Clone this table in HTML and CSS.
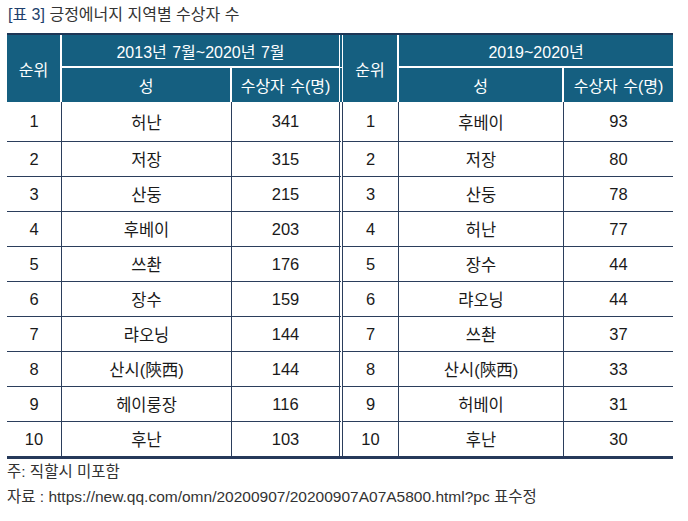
FILE: index.html
```html
<!DOCTYPE html>
<html lang="ko">
<head>
<meta charset="utf-8">
<link rel="stylesheet" href="styles.css">
</head>
<body>
<div class="page">
  <h1 class="title"><span class="tag">[표 3]</span> 긍정에너지 지역별 수상자 수</h1>
  <table class="data">
    <colgroup>
      <col class="c-rank"><col class="c-name"><col class="c-num">
      <col class="c-rank2"><col class="c-name2"><col class="c-num2">
    </colgroup>
    <thead>
      <tr class="h1">
        <th rowspan="2" class="hr">순위</th>
        <th colspan="2" class="hsplit">2013년 7월~2020년 7월</th>
        <th rowspan="2" class="hr">순위</th>
        <th colspan="2" class="hlast">2019~2020년</th>
      </tr>
      <tr class="h2">
        <th class="hr">성</th>
        <th class="hsplit">수상자 수(명)</th>
        <th class="hr">성</th>
        <th class="hlast">수상자 수(명)</th>
      </tr>
    </thead>
    <tbody>
      <tr class="first"><td>1</td><td>허난</td><td class="split">341</td><td>1</td><td>후베이</td><td class="last">93</td></tr>
      <tr><td>2</td><td>저장</td><td class="split">315</td><td>2</td><td>저장</td><td class="last">80</td></tr>
      <tr><td>3</td><td>산둥</td><td class="split">215</td><td>3</td><td>산둥</td><td class="last">78</td></tr>
      <tr><td>4</td><td>후베이</td><td class="split">203</td><td>4</td><td>허난</td><td class="last">77</td></tr>
      <tr><td>5</td><td>쓰촨</td><td class="split">176</td><td>5</td><td>장수</td><td class="last">44</td></tr>
      <tr><td>6</td><td>장수</td><td class="split">159</td><td>6</td><td>랴오닝</td><td class="last">44</td></tr>
      <tr><td>7</td><td>랴오닝</td><td class="split">144</td><td>7</td><td>쓰촨</td><td class="last">37</td></tr>
      <tr><td>8</td><td>산시(陝西)</td><td class="split">144</td><td>8</td><td>산시(陝西)</td><td class="last">33</td></tr>
      <tr><td>9</td><td>헤이룽장</td><td class="split">116</td><td>9</td><td>허베이</td><td class="last">31</td></tr>
      <tr class="end"><td>10</td><td>후난</td><td class="split">103</td><td>10</td><td>후난</td><td class="last">30</td></tr>
    </tbody>
  </table>
  <p class="note">주: 직할시 미포함</p>
  <p class="note">자료 : https://new.qq.com/omn/20200907/20200907A07A5800.html?pc 표수정</p>
</div>
</body>
</html>
```

FILE: styles.css
```css
* { box-sizing: border-box; }
html, body { margin: 0; padding: 0; background: #fff; }
body {
  font-family: "Liberation Sans", "Noto Sans CJK KR", sans-serif;
  color: #222;
}
.page { padding: 5px 15px 0 7px; }
.title {
  margin: 0 0 8px 1px;
  font-size: 16px;
  line-height: 20px;
  font-weight: normal;
  color: #333;
}
.tag { color: #1e3f6c; }
.data {
  width: 666px;
  table-layout: fixed;
  border-collapse: separate;
  border-spacing: 0;
  border-top: 2px solid #1d3656;
  border-bottom: 3px solid #26395a;
}
.c-rank { width: 55px; }
.c-name { width: 170px; }
.c-num { width: 111px; }
.c-rank2 { width: 56px; }
.c-name2 { width: 165px; }
.c-num2 { width: 109px; }
th {
  background: #155f80;
  color: #fff;
  font-weight: normal;
  font-size: 16px;
  padding: 0;
  text-align: center;
  word-spacing: 1px;
}
.h1 th { height: 33px; }
.h1 th.hsplit, .h1 th.hlast { border-bottom: 2px solid #fff; }
.h2 th { height: 34px; }
th.hr { border-right: 2px solid #fff; }
th.hsplit { border-right: 4px double #fff; }
td {
  padding: 0;
  height: 35px;
  text-align: center;
  font-size: 16.5px;
  color: #1a1a1a;
  border-bottom: 1px solid #2b3e5c;
  border-right: 1px solid #2b3e5c;
}
tr.first td { height: 40px; }
tr.end td { border-bottom: 0; height: 34px; }
td.split { border-right: 4px double #2b3e5c; }
td.last { border-right: 0; }
.note {
  margin: 0;
  font-size: 15.5px;
  line-height: 25px;
  color: #333;
}
```
